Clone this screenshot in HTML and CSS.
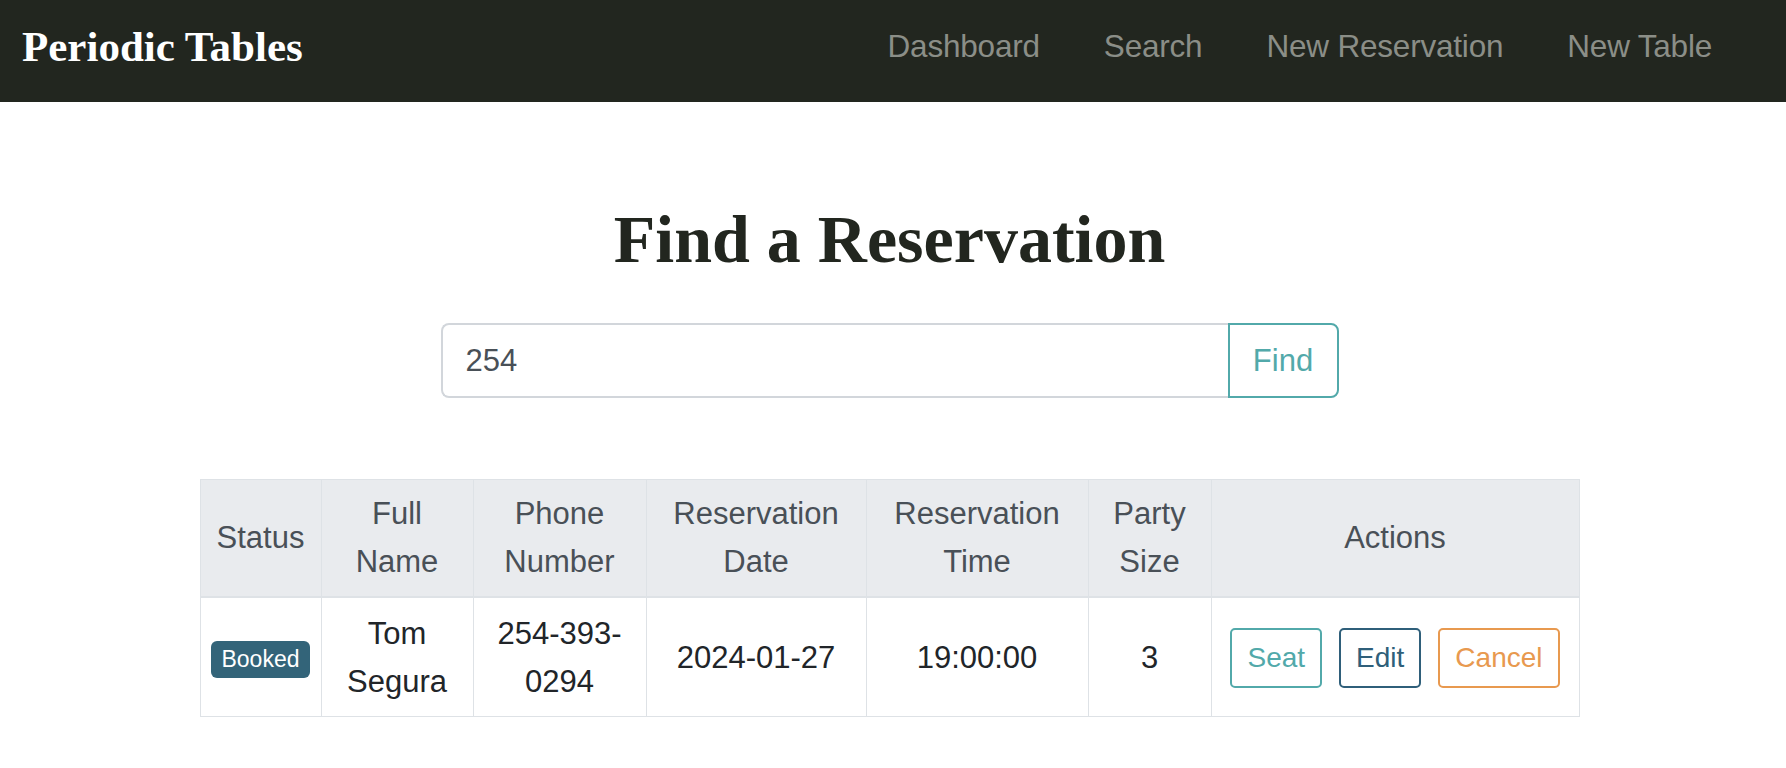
FILE: index.html
```html
<!DOCTYPE html>
<html lang="en">
<head>
<meta charset="utf-8">
<title>Periodic Tables - Search</title>
<link rel="stylesheet" href="styles.css">
</head>
<body>
<header class="navbar">
  <a class="brand" href="#">Periodic Tables</a>
  <nav class="nav">
    <a class="nav-link" href="#">Dashboard</a>
    <a class="nav-link" href="#">Search</a>
    <a class="nav-link" href="#">New Reservation</a>
    <a class="nav-link" href="#">New Table</a>
  </nav>
</header>
<main class="main">
  <h1 class="title">Find a Reservation</h1>
  <form class="search">
    <input class="search-input" type="text" value="254" name="mobile_number">
    <button class="search-btn" type="button">Find</button>
  </form>
  <table class="res-table">
    <colgroup>
      <col class="c-status"><col class="c-name"><col class="c-phone"><col class="c-date"><col class="c-time"><col class="c-party"><col class="c-actions">
    </colgroup>
    <thead>
      <tr>
        <th>Status</th>
        <th>Full Name</th>
        <th>Phone Number</th>
        <th>Reservation Date</th>
        <th>Reservation Time</th>
        <th>Party Size</th>
        <th>Actions</th>
      </tr>
    </thead>
    <tbody>
      <tr>
        <td><span class="badge">Booked</span></td>
        <td>Tom Segura</td>
        <td>254-393-0294</td>
        <td>2024-01-27</td>
        <td>19:00:00</td>
        <td>3</td>
        <td>
          <div class="actions">
            <button class="btn btn-seat" type="button">Seat</button>
            <button class="btn btn-edit" type="button">Edit</button>
            <button class="btn btn-cancel" type="button">Cancel</button>
          </div>
        </td>
      </tr>
    </tbody>
  </table>
</main>
</body>
</html>
```

FILE: styles.css
```css
* { box-sizing: border-box; }

body {
  margin: 0;
  background: #ffffff;
  font-family: "Liberation Sans", Arial, sans-serif;
  color: #212529;
}

.navbar {
  height: 102px;
  background: #22261f;
  display: flex;
  align-items: center;
  justify-content: space-between;
  padding: 0 74px 10px 22px;
}

.brand {
  font-family: "Liberation Serif", "Times New Roman", serif;
  font-weight: 700;
  font-size: 43px;
  color: #ffffff;
  text-decoration: none;
}

.nav {
  display: flex;
  gap: 64px;
}

.nav-link {
  font-size: 31.5px;
  color: #8b8e87;
  text-decoration: none;
  letter-spacing: -0.2px;
}

.main {
  display: flex;
  flex-direction: column;
  align-items: center;
  padding: 95px 7px 40px 0;
}

.title {
  margin: 0;
  font-family: "Liberation Serif", "Times New Roman", serif;
  font-weight: 700;
  font-size: 68px;
  line-height: 84px;
  color: #22261f;
}

.search {
  margin-top: 42px;
  display: flex;
  width: 898px;
  height: 75px;
}

.search-input {
  flex: 1;
  min-width: 0;
  height: 100%;
  border: 2px solid #d2d6db;
  border-right: none;
  border-radius: 8px 0 0 8px;
  padding: 0 23px;
  font-family: "Liberation Sans", Arial, sans-serif;
  font-size: 31px;
  color: #495057;
  background: #fff;
  outline: none;
}

.search-btn {
  width: 111px;
  height: 100%;
  border: 2px solid #52a9aa;
  border-radius: 0 8px 8px 0;
  background: #fff;
  color: #52a9aa;
  font-family: "Liberation Sans", Arial, sans-serif;
  font-size: 31px;
  padding: 0;
}

.res-table {
  margin-top: 81px;
  width: 1379px;
  table-layout: fixed;
  border-collapse: collapse;
  font-size: 31px;
  line-height: 48px;
  text-align: center;
}

.c-status { width: 121px; }
.c-name { width: 152px; }
.c-phone { width: 173px; }
.c-date { width: 220px; }
.c-time { width: 222px; }
.c-party { width: 123px; }
.c-actions { width: 368px; }

.res-table th,
.res-table td {
  border: 1px solid #dee2e6;
  padding: 10px 10px;
  vertical-align: middle;
}

.res-table th {
  background: #e9ebee;
  color: #495057;
  font-weight: 400;
  border-bottom: 2px solid #dee2e6;
}

.res-table td {
  color: #212529;
  padding: 12px 10px 10px;
}

.badge {
  display: inline-block;
  height: 37px;
  line-height: 37px;
  padding: 0 10px;
  border-radius: 6px;
  background: #336479;
  color: #ffffff;
  font-size: 23px;
  vertical-align: middle;
}

.actions {
  display: flex;
  justify-content: center;
  gap: 17px;
}

.btn {
  height: 60px;
  padding: 0 15px;
  border: 2px solid;
  border-radius: 5px;
  background: #fff;
  font-family: "Liberation Sans", Arial, sans-serif;
  font-size: 28px;
  line-height: 56px;
}

.btn-seat { color: #52a9aa; border-color: #52a9aa; }
.btn-edit { color: #2f5f7a; border-color: #2f5f7a; }
.btn-cancel { color: #e8994f; border-color: #e8994f; }
```
